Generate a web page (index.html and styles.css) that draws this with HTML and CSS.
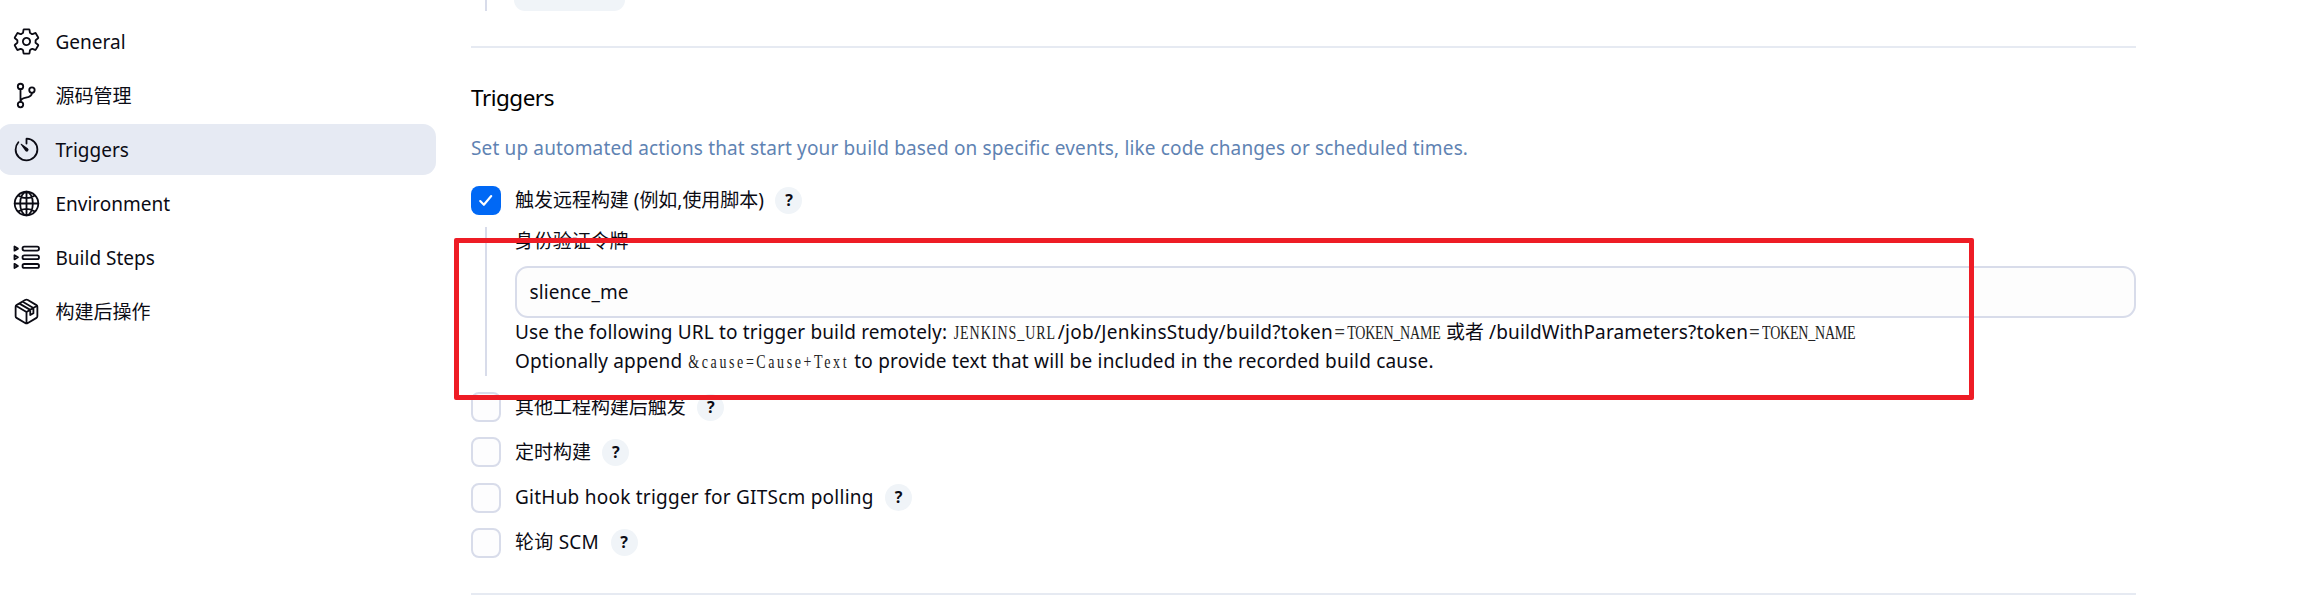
FILE: index.html
```html
<!DOCTYPE html>
<html lang="zh-CN">
<head>
<meta charset="utf-8">
<title>Triggers</title>
<link rel="stylesheet" href="styles.css">
</head>
<body>
<div class="page">
  <nav class="sidebar">
    <a class="task">
      <svg class="icon" viewBox="0 0 512 512"><path d="M262.29 192.31a64 64 0 1057.4 57.4 64.13 64.13 0 00-57.4-57.4zM416.39 256a154.34 154.34 0 01-1.53 20.79l45.21 35.46a10.81 10.81 0 012.45 13.75l-42.77 74a10.81 10.81 0 01-13.14 4.59l-44.9-18.08a16.11 16.11 0 00-15.17 1.75A164.48 164.48 0 01325 400.8a15.94 15.94 0 00-8.82 12.14l-6.73 47.89a11.08 11.08 0 01-10.68 9.17h-85.54a11.11 11.11 0 01-10.69-8.87l-6.72-47.82a16.07 16.07 0 00-9-12.22 155.3 155.3 0 01-21.46-12.57 16 16 0 00-15.11-1.71l-44.89 18.07a10.81 10.81 0 01-13.14-4.58l-42.77-74a10.8 10.8 0 012.45-13.75l38.21-30a16.05 16.05 0 006-14.08c-.36-4.17-.58-8.33-.58-12.5s.21-8.27.58-12.35a16 16 0 00-6.07-13.94l-38.19-30A10.81 10.81 0 0149.48 186l42.77-74a10.81 10.81 0 0113.14-4.59l44.9 18.08a16.11 16.11 0 0015.17-1.75A164.48 164.48 0 01187 111.2a15.94 15.94 0 008.82-12.14l6.73-47.89A11.08 11.08 0 01213.23 42h85.54a11.11 11.11 0 0110.69 8.87l6.72 47.82a16.07 16.07 0 009 12.22 155.3 155.3 0 0121.46 12.57 16 16 0 0015.11 1.71l44.89-18.07a10.81 10.81 0 0113.14 4.58l42.77 74a10.8 10.8 0 01-2.45 13.75l-38.21 30a16.05 16.05 0 00-6.05 14.08c.33 4.14.55 8.3.55 12.47z"/></svg>
      <span class="task-text">General</span>
    </a>
    <a class="task">
      <svg class="icon" viewBox="0 0 512 512"><circle cx="150" cy="96" r="48"/><circle cx="150" cy="416" r="48"/><circle cx="352" cy="160" r="48"/><path d="M150 368V144M352 208c0 128-202 48-202 160"/></svg>
      <span class="task-text">源码管理</span>
    </a>
    <a class="task task-active">
      <svg class="icon" viewBox="0 0 512 512"><path d="M112.91 128A191.85 191.85 0 0064 254c-1.18 106.35 85.65 193.8 192 194 106.2.2 192-85.83 192-192 0-104.54-83.55-189.61-187.5-192a4.36 4.36 0 00-4.5 4.37V152"/><path class="solid" d="M233.38 278.63l-79-113a8.13 8.13 0 0111.32-11.32l113 79a32.5 32.5 0 01-37.25 53.26 33.21 33.21 0 01-8.07-7.94z"/></svg>
      <span class="task-text">Triggers</span>
    </a>
    <a class="task">
      <svg class="icon" viewBox="0 0 512 512"><circle cx="256" cy="256" r="208"/><path d="M256 48c-58.07 0-112.67 93.31-112.67 208S197.93 464 256 464s112.67-93.31 112.67-208S314.07 48 256 48zM117.33 117.33c38.24 27.15 86.38 43.34 138.67 43.34s100.43-16.19 138.67-43.34M394.67 394.67c-38.24-27.15-86.38-43.34-138.67-43.34s-100.43 16.19-138.67 43.34M256 48v416M464 256H48"/></svg>
      <span class="task-text">Environment</span>
    </a>
    <a class="task">
      <svg class="icon" viewBox="0 0 512 512"><rect x="186" y="65" width="290" height="68" rx="30"/><rect x="186" y="218" width="290" height="68" rx="30"/><rect x="186" y="371" width="290" height="68" rx="30"/><path d="M44 62v74l60-37zM44 215v74l60-37zM44 368v74l60-37z"/></svg>
      <span class="task-text">Build Steps</span>
    </a>
    <a class="task">
      <svg class="icon" viewBox="0 0 512 512"><path d="M448 341.37V170.61a32 32 0 00-16.11-27.67l-152-88.46a47.94 47.94 0 00-48.24 0l-152 88.46A32 32 0 0064 170.61v170.76A32 32 0 0080.11 369l152 88.46a48 48 0 0048.24 0l152-88.46A32 32 0 00448 341.37zM69 153.99l187 110 187-110M256 463.99v-200M132 117l190 110v92l56-33v-92L190 83"/></svg>
      <span class="task-text">构建后操作</span>
    </a>
  </nav>

  <main class="content">
    <div class="previous"><i class="previous-line"></i><i class="previous-button"></i></div>
    <hr class="divider">
    <h2 class="title">Triggers</h2>
    <p class="description">Set up automated actions that start your build based on specific events, like code changes or scheduled times.</p>

    <label class="option option-first">
      <span class="box box-checked"><svg class="check" viewBox="0 0 30 30"><path d="M9 15.6l3.8 3.8 7.6-9"/></svg></span>
      <span class="option-text">触发远程构建 (例如,使用脚本)</span><span class="help">?</span>
    </label>

    <section class="nested">
      <div class="field-label">身份验证令牌</div>
      <div class="field">slience_me</div>
      <div class="hint"><span class="s1">Use the following URL to trigger build remotely:</span> <code class="code jenkins">JENKINS_URL</code><span class="s2">/job/JenkinsStudy/build?token</span><span class="eq">=</span><code class="code token">TOKEN_NAME</code> 或者 <span class="s3">/buildWithParameters?token</span><span class="eq">=</span><code class="code token">TOKEN_NAME</code></div>
      <div class="hint"><span class="s1">Optionally append</span> <code class="code cause">&amp;cause=Cause+Text</code> <span class="s4">to provide text that will be included in the recorded build cause.</span></div>
    </section>

    <div class="options">
      <label class="option"><span class="box"></span><span class="option-text">其他工程构建后触发</span><span class="help">?</span></label>
      <label class="option"><span class="box"></span><span class="option-text">定时构建</span><span class="help">?</span></label>
      <label class="option"><span class="box"></span><span class="option-text option-latin">GitHub hook trigger for GITScm polling</span><span class="help">?</span></label>
      <label class="option"><span class="box"></span><span class="option-text option-latin">轮询 SCM</span><span class="help">?</span></label>
    </div>
    <hr class="divider">
  </main>
  <div class="marker"></div>
</div>
</body>
</html>
```
FILE: styles.css
```css
* { box-sizing: border-box; }
body {
  margin: 0;
  background: #fff;
  color: #0b0b14;
  font: 400 19px/29px "Noto Sans", "Noto Sans CJK SC", sans-serif;
}
.page {
  position: relative;
  display: flex;
  height: 614px;
  overflow: hidden;
}
.sidebar {
  display: flex;
  flex-direction: column;
  gap: 3px;
  flex: none;
  width: 438px;
  margin-left: -2px;
  padding-top: 16px;
}
.task {
  display: flex;
  align-items: center;
  gap: 14.5px;
  height: 51px;
  padding-left: 14px;
  border-radius: 13px;
}
.task-text { padding-top: 2px; }
.task-active { background: #e6eaf3; }
.icon {
  flex: none;
  width: 29px;
  height: 29px;
  fill: none;
  stroke: #0b0b14;
  stroke-width: 32;
  stroke-linecap: round;
  stroke-linejoin: round;
}
.icon .solid { fill: #0b0b14; stroke: none; }
.content {
  flex: none;
  width: 1665px;
  margin-left: 35px;
}
.previous { display: flex; height: 11px; }
.previous-line { width: 2px; margin-left: 14px; background: #d8dcea; }
.previous-button {
  width: 111px;
  margin-left: 27px;
  background: #f0f4f8;
  border-radius: 0 0 13px 13px;
}
.divider {
  height: 2px;
  margin: 35px 0 0;
  border: 0;
  background: #e6eaf2;
}
.title {
  margin: 35px 0 0;
  font-size: 22.5px;
  font-weight: 400;
  line-height: 30px;
  letter-spacing: -.5px;
  color: #000;
}
.description {
  margin: 21px 0 0;
  line-height: 28px;
  letter-spacing: .145px;
  color: #5f83b3;
}
.option {
  display: flex;
  align-items: center;
  height: 30px;
}
.option-first { height: 29px; margin-top: 24px; }
.option-text { margin-left: 14px; letter-spacing: -.03px; }
.option-latin { letter-spacing: .24px; }
.box {
  flex: none;
  width: 30px;
  height: 30px;
  border: 2px solid #d8dcea;
  border-radius: 8px;
  background: #fdfdfe;
}
.box-checked { height: 29px; border: 0; background: #0068f5; }
.check {
  display: block;
  width: 30px;
  height: 29px;
  fill: none;
  stroke: #fff;
  stroke-width: 2.2;
  stroke-linecap: round;
  stroke-linejoin: round;
}
.help {
  width: 27px;
  height: 27px;
  margin-left: 11.5px;
  border-radius: 50%;
  background: #f0f4f8;
  font-size: 16px;
  font-weight: 700;
  line-height: 27px;
  text-align: center;
}
.nested {
  height: 149px;
  margin: 12px 0 0 14px;
  padding-left: 28px;
  border-left: 2px solid #d8dcea;
}
.field-label { height: 29px; letter-spacing: -.1px; }
.field {
  height: 52px;
  margin-top: 10px;
  margin-left: -.5px;
  padding: 10px 13px 8px;
  border: 2px solid #d8dcea;
  border-radius: 13px;
  background: #fdfdfd;
  letter-spacing: .1px;
}
.hint { height: 29px; white-space: nowrap; }
.s1 { letter-spacing: .15px; }
.s2 { letter-spacing: .28px; }
.s3 { letter-spacing: .13px; }
.s4 { letter-spacing: .2px; }
.code {
  display: inline-block;
  font: 14px/16px "Liberation Serif", serif;
  color: #222;
  transform: scaleY(1.32);
  transform-origin: 0 80%;
}
.jenkins { width: 104px; margin-left: 1.5px; letter-spacing: .97px; }
.eq { display: inline-block; width: 14px; padding-left: 1px; color: #333; }
.token { width: 94px; letter-spacing: -.2px; }
.cause { width: 161px; margin-left: 1px; letter-spacing: 2.6px; }
.options {
  display: flex;
  flex-direction: column;
  gap: 15.3px;
  margin-top: 16px;
}
.marker {
  position: absolute;
  left: 454px;
  top: 237.5px;
  width: 1520px;
  height: 162px;
  border: 5px solid #ee1c25;
  border-radius: 2px;
}
```
